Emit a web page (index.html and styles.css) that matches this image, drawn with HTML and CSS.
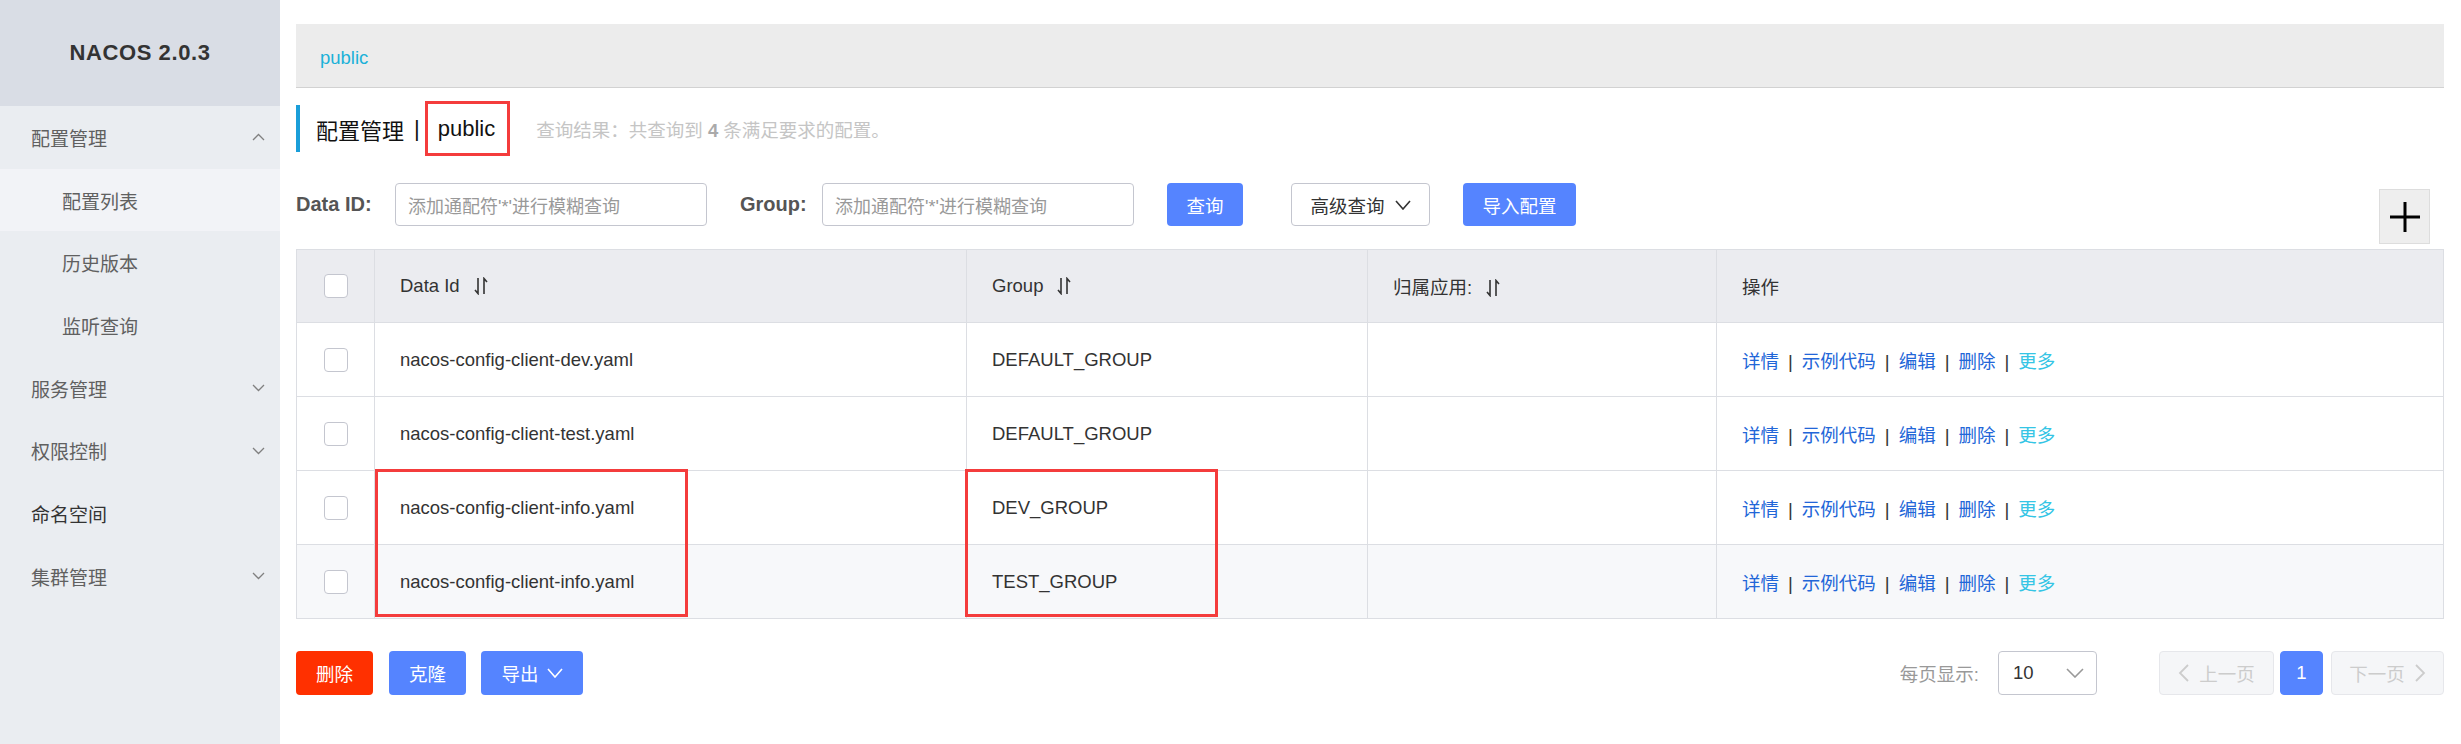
FILE: index.html
```html
<!DOCTYPE html>
<html lang="zh-CN">
<head>
<meta charset="utf-8">
<title>NACOS 2.0.3</title>
<link rel="stylesheet" href="styles.css">
</head>
<body>
<div class="layout">
  <aside class="sidebar">
    <div class="brand">NACOS 2.0.3</div>
    <ul class="menu">
      <li class="item"><span>配置管理</span>
        <svg class="chev" width="13" height="8" viewBox="0 0 13 8"><polyline points="1,7 6.5,1.5 12,7" fill="none" stroke="#808080" stroke-width="1.3"/></svg>
      </li>
      <li class="item sub active"><span>配置列表</span></li>
      <li class="item sub"><span>历史版本</span></li>
      <li class="item sub"><span>监听查询</span></li>
      <li class="item"><span>服务管理</span>
        <svg class="chev" width="13" height="8" viewBox="0 0 13 8"><polyline points="1,1 6.5,6.5 12,1" fill="none" stroke="#808080" stroke-width="1.3"/></svg>
      </li>
      <li class="item"><span>权限控制</span>
        <svg class="chev" width="13" height="8" viewBox="0 0 13 8"><polyline points="1,1 6.5,6.5 12,1" fill="none" stroke="#808080" stroke-width="1.3"/></svg>
      </li>
      <li class="item leaf"><span>命名空间</span></li>
      <li class="item"><span>集群管理</span>
        <svg class="chev" width="13" height="8" viewBox="0 0 13 8"><polyline points="1,1 6.5,6.5 12,1" fill="none" stroke="#808080" stroke-width="1.3"/></svg>
      </li>
    </ul>
  </aside>

  <main class="main">
    <div class="crumb"><a class="crumb-link">public</a></div>

    <div class="title-row">
      <span class="title">配置管理</span>
      <span class="sep">|</span>
      <span class="ns">public</span>
      <span class="result">查询结果：共查询到 <b>4</b> 条满足要求的配置。</span>
    </div>

    <div class="search-row">
      <span class="label label-id">Data ID:</span>
      <div class="input"><span class="ph">添加通配符'*'进行模糊查询</span></div>
      <span class="label label-group">Group:</span>
      <div class="input"><span class="ph">添加通配符'*'进行模糊查询</span></div>
      <span class="btn primary btn-query">查询</span>
      <span class="btn normal btn-adv">高级查询
        <svg width="16" height="10" viewBox="0 0 16 10"><polyline points="1,1 8,9 15,1" fill="none" stroke="#333" stroke-width="1.6"/></svg>
      </span>
      <span class="btn primary btn-import">导入配置</span>
      <span class="plus">
        <svg width="32" height="32" viewBox="0 0 32 32"><path d="M16 1 V31 M1 16 H31" stroke="#000" stroke-width="3"/></svg>
      </span>
    </div>

    <div class="table-wrap">
      <table class="grid">
        <colgroup>
          <col class="c-cb"><col class="c-id"><col class="c-group"><col class="c-app"><col class="c-ops">
        </colgroup>
        <thead>
          <tr>
            <th class="cb-cell"><span class="checkbox"></span></th>
            <th>Data Id<svg class="sort" width="14" height="18" viewBox="0 0 14 18"><path d="M4 1 V16.5 L1 13 M10 17 V1.5 L13 5" fill="none" stroke="#333" stroke-width="1.6"/></svg></th>
            <th>Group<svg class="sort" width="14" height="18" viewBox="0 0 14 18"><path d="M4 1 V16.5 L1 13 M10 17 V1.5 L13 5" fill="none" stroke="#333" stroke-width="1.6"/></svg></th>
            <th>归属应用:<svg class="sort" width="14" height="18" viewBox="0 0 14 18"><path d="M4 1 V16.5 L1 13 M10 17 V1.5 L13 5" fill="none" stroke="#333" stroke-width="1.6"/></svg></th>
            <th>操作</th>
          </tr>
        </thead>
        <tbody>
          <tr>
            <td class="cb-cell"><span class="checkbox"></span></td>
            <td>nacos-config-client-dev.yaml</td>
            <td>DEFAULT_GROUP</td>
            <td></td>
            <td class="ops"><a>详情</a><span class="bar">|</span><a>示例代码</a><span class="bar">|</span><a>编辑</a><span class="bar">|</span><a>删除</a><span class="bar">|</span><a class="more">更多</a></td>
          </tr>
          <tr>
            <td class="cb-cell"><span class="checkbox"></span></td>
            <td>nacos-config-client-test.yaml</td>
            <td>DEFAULT_GROUP</td>
            <td></td>
            <td class="ops"><a>详情</a><span class="bar">|</span><a>示例代码</a><span class="bar">|</span><a>编辑</a><span class="bar">|</span><a>删除</a><span class="bar">|</span><a class="more">更多</a></td>
          </tr>
          <tr>
            <td class="cb-cell"><span class="checkbox"></span></td>
            <td>nacos-config-client-info.yaml</td>
            <td>DEV_GROUP</td>
            <td></td>
            <td class="ops"><a>详情</a><span class="bar">|</span><a>示例代码</a><span class="bar">|</span><a>编辑</a><span class="bar">|</span><a>删除</a><span class="bar">|</span><a class="more">更多</a></td>
          </tr>
          <tr class="hover">
            <td class="cb-cell"><span class="checkbox"></span></td>
            <td>nacos-config-client-info.yaml</td>
            <td>TEST_GROUP</td>
            <td></td>
            <td class="ops"><a>详情</a><span class="bar">|</span><a>示例代码</a><span class="bar">|</span><a>编辑</a><span class="bar">|</span><a>删除</a><span class="bar">|</span><a class="more">更多</a></td>
          </tr>
        </tbody>
      </table>
      <div class="mark mark-id"></div>
      <div class="mark mark-group"></div>
    </div>

    <div class="footer">
      <div class="actions">
        <span class="btn danger btn-del">删除</span>
        <span class="btn primary btn-clone">克隆</span>
        <span class="btn primary btn-export">导出
          <svg width="16" height="10" viewBox="0 0 16 10"><polyline points="1,1 8,9 15,1" fill="none" stroke="#fff" stroke-width="1.6"/></svg>
        </span>
      </div>
      <div class="paging">
        <span class="ps-label">每页显示:</span>
        <span class="select"><span>10</span>
          <svg width="18" height="10" viewBox="0 0 18 10"><polyline points="1,1 9,9 17,1" fill="none" stroke="#999" stroke-width="1.6"/></svg>
        </span>
        <span class="pg pg-prev">
          <svg width="11" height="18" viewBox="0 0 11 18"><polyline points="10,1 2,9 10,17" fill="none" stroke="#ccc" stroke-width="1.8"/></svg>
          <span>上一页</span>
        </span>
        <span class="pg pg-cur">1</span>
        <span class="pg pg-next">
          <span>下一页</span>
          <svg width="11" height="18" viewBox="0 0 11 18"><polyline points="1,1 9,9 1,17" fill="none" stroke="#ccc" stroke-width="1.8"/></svg>
        </span>
      </div>
    </div>
  </main>
</div>
</body>
</html>
```

FILE: styles.css
```css
* { box-sizing: border-box; }
html, body { margin: 0; padding: 0; }
body {
  font-family: "Liberation Sans", "Noto Sans CJK SC", sans-serif;
  font-size: 18.5px;
  color: #333;
  background: #fff;
}
.layout { display: flex; height: 744px; }

/* sidebar */
.sidebar { width: 280px; flex: none; background: #eaedf1; }
.brand {
  height: 106px;
  background: #d9dde5;
  display: flex; align-items: center; justify-content: center;
  font-weight: bold; font-size: 22px; letter-spacing: 0.6px; color: #333;
}
.menu { list-style: none; margin: 0; padding: 0; }
.item {
  height: 62.7px;
  display: flex; align-items: center; justify-content: space-between;
  padding: 0 15px 0 31px;
  font-size: 19px; color: #606060;
}
.item.sub { padding-left: 62px; }
.item.active { background: #f2f3f7; }
.item.leaf { color: #333; }

/* main */
.main { flex: 1; min-width: 0; padding: 24px 17px 0 16px; }
.crumb {
  height: 64px;
  background: #ececec;
  border-bottom: 1px solid #d2d2d2;
  display: flex; align-items: center;
  padding: 4px 0 0 24px;
}
.crumb-link { color: #1bb1d8; font-size: 18.5px; }

.title-row {
  margin-top: 17px;
  height: 47px;
  border-left: 4px solid #1a9ed9;
  display: flex; align-items: center;
  padding-left: 16px;
}
.title { font-size: 22px; color: #111; }
.sep { font-size: 22px; color: #111; margin: 0 5px 0 10px; }
.ns {
  height: 55px; margin: -4px 0;
  border: 3px solid #f43c3c;
  padding: 0 12px 0 10px;
  display: flex; align-items: center;
  font-size: 22px; color: #111;
}
.result { margin-left: 26px; color: #c5c5c5; }
.result b { color: #aaa; }

.search-row { margin-top: 31px; display: flex; align-items: flex-start; }
.label { height: 43px; line-height: 43px; font-weight: bold; font-size: 20px; color: #555; }
.label-id { width: 99px; }
.label-group { width: 82px; margin-left: 33px; }
.input {
  width: 312px; height: 43px;
  border: 1px solid #c4c6cf; border-radius: 4px;
  padding: 0 12px;
  display: flex; align-items: center;
}
.ph { color: #999; font-size: 18px; }
.btn {
  height: 43px; border-radius: 4px;
  display: inline-flex; align-items: center; justify-content: center;
  font-size: 18.5px;
}
.btn.primary { background: #5584ff; color: #fff; }
.btn.danger { background: #ff3000; color: #fff; }
.btn.normal { background: #fff; border: 1px solid #c4c6cf; color: #333; }
.btn-query { margin-left: 33px; width: 76px; }
.btn-adv { margin-left: 48px; width: 139px; gap: 10px; }
.btn-import { margin-left: 33px; width: 113px; }
.plus {
  margin-left: auto; margin-right: 14px; margin-top: 6px;
  width: 51px; height: 55px;
  background: #eee; border: 1px solid #ddd;
  display: flex; align-items: center; justify-content: center;
}

/* table */
.table-wrap { position: relative; margin-top: 5px; }
.grid { width: 100%; border-collapse: collapse; table-layout: fixed; }
.c-cb { width: 78px; }
.c-id { width: 592px; }
.c-group { width: 401px; }
.c-app { width: 349px; }
.grid th, .grid td {
  border: 1px solid #dcdee3;
  text-align: left;
  padding: 0 0 0 25px;
  font-weight: normal;
  color: #333;
  white-space: nowrap;
}
.grid thead th { background: #ebecf0; height: 73px; }
.grid tbody td { height: 74px; }
.grid tr.hover td { background: #f7f8fa; }
.grid .cb-cell { padding: 0; text-align: center; }
.checkbox {
  display: inline-block; vertical-align: middle;
  width: 24px; height: 24px;
  border: 1px solid #c4c6cf; border-radius: 4px; background: #fff;
}
.sort { vertical-align: middle; margin-left: 14px; margin-top: -3px; }
.ops a { color: #2266d8; }
.ops a.more { color: #35c5e5; }
.ops .bar { margin: 0 9px; color: #333; }

.mark { position: absolute; border: 3px solid #f43c3c; pointer-events: none; }
.mark-id { left: 79px; top: 220px; width: 313px; height: 148px; }
.mark-group { left: 669px; top: 220px; width: 253px; height: 148px; }

/* footer */
.footer { margin-top: 32px; display: flex; justify-content: space-between; align-items: center; }
.actions { display: flex; }
.actions .btn { height: 44px; }
.btn-del { width: 77px; }
.btn-clone { width: 77px; margin-left: 16px; }
.btn-export { width: 102px; margin-left: 15px; gap: 8px; }
.paging { display: flex; align-items: center; }
.ps-label { color: #999; margin-right: 19px; }
.select {
  width: 99px; height: 44px;
  border: 1px solid #c4c6cf; border-radius: 4px;
  display: flex; align-items: center; justify-content: space-between;
  padding: 0 12px 0 14px; color: #333;
}
.pg {
  height: 44px;
  border: 1px solid #e6e7eb; background: #f5f6f8; color: #ccc;
  border-radius: 4px;
  display: flex; align-items: center; justify-content: center; gap: 10px;
}
.pg-prev { width: 115px; margin-left: 62px; }
.pg-cur { width: 43px; margin-left: 6px; background: #5584ff; border-color: #5584ff; color: #fff; }
.pg-next { width: 113px; margin-left: 8px; }
```
